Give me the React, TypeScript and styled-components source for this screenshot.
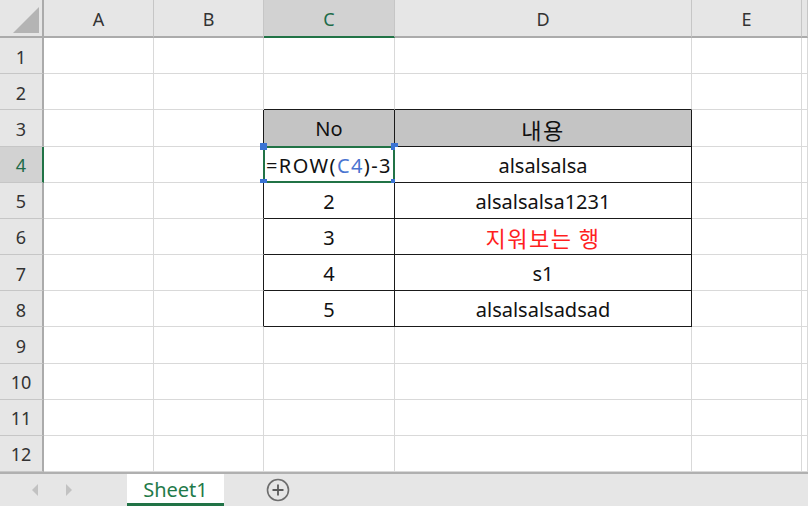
import React from "react";
import styled, { createGlobalStyle } from "styled-components";

const GlobalStyle = createGlobalStyle`
  html, body {
    margin: 0;
    padding: 0;
    background: #ffffff;
  }
  body {
    font-family: "Noto Sans", "Noto Sans CJK KR", sans-serif;
  }
`;

const COLS = [44, 110, 110, 131, 297, 110, 6];
const LETTERS = ["A", "B", "C", "D", "E", ""];
const GRID_LINE = "#d9d9d9";
const BLACK = "#1a1a1a";
const GREEN = "#217346";

const SheetWrap = styled.div`
  display: flex;
  flex-direction: column;
  width: 808px;
  height: 506px;
  overflow: hidden;
`;

const Grid = styled.div`
  display: grid;
  grid-template-columns: ${COLS.map(c => c + "px").join(" ")};
  grid-template-rows: 38px repeat(12, 1fr);
  height: 472px;
`;

const Corner = styled.div`
  position: relative;
  background: #e6e6e6;
  border-right: 2px solid #ababab;
  border-bottom: 2px solid #ababab;
  box-sizing: border-box;
  &::after {
    content: "";
    position: absolute;
    right: 3px;
    bottom: 3px;
    width: 0;
    height: 0;
    border-left: 26px solid transparent;
    border-bottom: 26px solid #b4b4b4;
  }
`;

const ColHeader = styled.div<{ $active?: boolean }>`
  display: flex;
  align-items: center;
  justify-content: center;
  box-sizing: border-box;
  background: ${p => (p.$active ? "#d2d2d2" : "#e6e6e6")};
  border-right: 1px solid #c6c6c6;
  border-bottom: 2px solid ${p => (p.$active ? GREEN : "#ababab")};
  color: ${p => (p.$active ? "#1e6b49" : "#333")};
  font-size: 18px;
  padding-top: 2px;
`;

const RowHeader = styled.div<{ $active?: boolean }>`
  display: flex;
  align-items: center;
  justify-content: center;
  box-sizing: border-box;
  background: ${p => (p.$active ? "#d2d2d2" : "#e6e6e6")};
  border-right: 2px solid ${p => (p.$active ? GREEN : "#ababab")};
  border-bottom: 1px solid #c6c6c6;
  color: ${p => (p.$active ? "#1e6b49" : "#333")};
  font-size: 18px;
  padding-top: 2px;
`;

const Cell = styled.div<{
  $right: string;
  $bottom: string;
  $bg?: string;
  $color?: string;
  $align?: string;
}>`
  position: relative;
  display: flex;
  align-items: center;
  justify-content: ${p => p.$align || "center"};
  box-sizing: border-box;
  background: ${p => p.$bg || "#ffffff"};
  border-right: 1px solid ${p => p.$right};
  border-bottom: 1px solid ${p => p.$bottom};
  color: ${p => p.$color || "#111"};
  font-size: 20px;
  white-space: nowrap;
  padding: 2px 0 0 ${p => (p.$align === "flex-start" ? "2px" : "0")};
`;

const KoText = styled.span`
  font-family: "Noto Sans CJK KR", sans-serif;
  font-size: 22px;
  letter-spacing: 1.5px;
`;

const Formula = styled.span`
  letter-spacing: 1.4px;
`;

const Selection = styled.div`
  position: absolute;
  left: -1px;
  top: -1px;
  right: -1px;
  bottom: -1px;
  border: 2px solid ${GREEN};
  pointer-events: none;
`;

const Handle = styled.span<{ $x: "left" | "right"; $y: "top" | "bottom" }>`
  position: absolute;
  width: 7px;
  height: 7px;
  background: #3b73d4;
  ${p => p.$x}: -5px;
  ${p => p.$y}: -5px;
`;

const RefText = styled.span`
  color: #4a74d0;
`;

const TabBar = styled.div`
  flex: 1;
  display: flex;
  align-items: stretch;
  background: #e6e6e6;
  border-top: 2px solid #b0b0b0;
`;

const NavArrows = styled.div`
  display: flex;
  align-items: center;
  gap: 28px;
  width: 127px;
  padding-left: 32px;
  box-sizing: border-box;
`;

const Arrow = styled.span<{ $dir: "left" | "right" }>`
  width: 0;
  height: 0;
  border-top: 6px solid transparent;
  border-bottom: 6px solid transparent;
  ${p =>
    p.$dir === "left"
      ? "border-right: 6px solid #c2c2c2;"
      : "border-left: 6px solid #c2c2c2;"}
`;

const SheetTab = styled.div`
  display: flex;
  align-items: center;
  justify-content: center;
  width: 97px;
  background: #ffffff;
  border-bottom: 3px solid ${GREEN};
  box-sizing: border-box;
  color: #1f7a4a;
  font-size: 20px;
  padding-top: 1px;
`;

const AddButton = styled.div`
  display: flex;
  align-items: center;
  margin-left: 42px;
`;

const table: Record<number, [string, string, string?]> = {
  3: ["No", "내용"],
  4: ["", "alsalsalsa"],
  5: ["2", "alsalsalsa1231"],
  6: ["3", "지워보는 행", "#ff1f1f"],
  7: ["4", "s1"],
  8: ["5", "alsalsalsadsad"],
};

const hasKorean = (s: string) => /[\uac00-\ud7a3]/.test(s);

const App: React.FC = () => {
  const rows = Array.from({ length: 12 }, (_, i) => i + 1);

  const rightColor = (r: number, c: number) =>
    r >= 3 && r <= 8 && c >= 1 && c <= 3 ? BLACK : GRID_LINE;
  const bottomColor = (r: number, c: number) =>
    r >= 2 && r <= 8 && (c === 2 || c === 3) ? BLACK : GRID_LINE;

  return (
    <>
      <GlobalStyle />
      <SheetWrap>
        <Grid>
          <Corner />
          {LETTERS.map((l, i) => (
            <ColHeader key={"h" + i} $active={l === "C"}>
              {l}
            </ColHeader>
          ))}
          {rows.map(r => (
            <React.Fragment key={r}>
              <RowHeader $active={r === 4}>{r}</RowHeader>
              {LETTERS.map((_, c) => {
                const data = table[r];
                const isHead = r === 3 && (c === 2 || c === 3);
                let content: React.ReactNode = null;
                let color: string | undefined;
                if (data && c === 2) content = data[0];
                if (data && c === 3) {
                  content = hasKorean(data[1]) ? (
                    <KoText>{data[1]}</KoText>
                  ) : (
                    data[1]
                  );
                  color = data[2];
                }
                const active = r === 4 && c === 2;
                if (active) {
                  content = (
                    <>
                      <Formula>
                        =ROW(<RefText>C4</RefText>)-3
                      </Formula>
                      <Selection>
                        <Handle $x="left" $y="top" />
                        <Handle $x="right" $y="top" />
                        <Handle $x="left" $y="bottom" />
                        <Handle $x="right" $y="bottom" />
                      </Selection>
                    </>
                  );
                }
                return (
                  <Cell
                    key={c}
                    $right={rightColor(r, c)}
                    $bottom={bottomColor(r, c)}
                    $bg={isHead ? "#c4c4c4" : undefined}
                    $color={color}
                    $align={active ? "flex-start" : "center"}
                  >
                    {content}
                  </Cell>
                );
              })}
            </React.Fragment>
          ))}
        </Grid>
        <TabBar>
          <NavArrows>
            <Arrow $dir="left" />
            <Arrow $dir="right" />
          </NavArrows>
          <SheetTab>Sheet1</SheetTab>
          <AddButton>
            <svg width="24" height="24" viewBox="0 0 24 24">
              <circle cx="12" cy="12" r="10.5" fill="none" stroke="#6e6e6e" strokeWidth="1.6" />
              <path d="M12 6.5v11M6.5 12h11" stroke="#5a5a5a" strokeWidth="1.8" />
            </svg>
          </AddButton>
        </TabBar>
      </SheetWrap>
    </>
  );
};

export default App;
